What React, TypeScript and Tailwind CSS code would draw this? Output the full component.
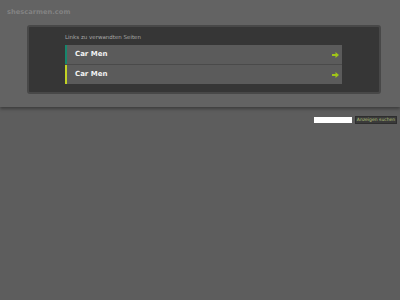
import React from "react";

function Arrow() {
  return (
    <svg width="7" height="6" viewBox="0 0 7 6" className="block">
      <path d="M0 2h3.5V0L7 3 3.5 6V4H0z" fill="#9fc418" />
    </svg>
  );
}

function Row({ color }: { color: string }) {
  return (
    <div className="flex h-[19px] items-center bg-[#5b5b5b]">
      <div className={`h-full w-[2px] ${color}`} />
      <span className="ml-[8px] flex-1 text-[7px] font-bold text-[#f2f2f2]">Car Men</span>
      <div className="mr-[3px]"><Arrow /></div>
    </div>
  );
}

export default function App() {
  return (
    <div className="min-h-[300px] w-[400px] bg-[#5d5d5d]" style={{ fontFamily: '"DejaVu Sans", Verdana, sans-serif' }}>
      <div className="h-[107px] bg-[#636363] pt-[7px] shadow-[0_2px_3px_rgba(0,0,0,0.35)]">
        <div className="pl-[7px] text-[6.7px] font-bold leading-[10px] text-[#828282]">shescarmen.com</div>
        <div className="ml-[27px] mt-[8px] h-[69px] w-[354px] rounded-[3px] border-2 border-[#484848] bg-[#363636] pt-[6px]">
          <div className="ml-[36px] text-[5.5px] leading-[8px] text-[#a8a8a8]">Links zu verwandten Seiten</div>
          <div className="ml-[36px] mt-[4px] flex w-[277px] flex-col gap-[1px] bg-[#4a4a4a]">
            <Row color="bg-[#16866c]" />
            <Row color="bg-[#c2d324]" />
          </div>
        </div>
      </div>
      <div className="flex justify-end gap-[3px] pr-[3px] pt-[9px]">
        <div className="mt-[1px] h-[6px] w-[38px] bg-white" />
        <div className="flex h-[8px] w-[42px] items-center justify-center border border-[#2e2e2e] bg-[#3a3a3a] text-[4.5px] leading-none text-[#b6c27a]">Anzeigen suchen</div>
      </div>
    </div>
  );
}
